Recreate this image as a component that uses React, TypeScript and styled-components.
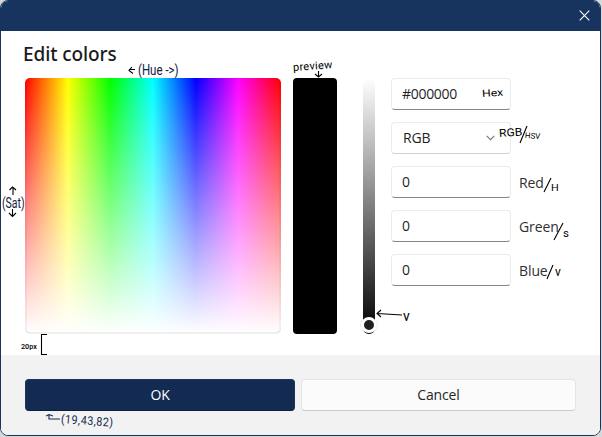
import React from "react";
import styled, { createGlobalStyle, css } from "styled-components";

const Global = createGlobalStyle`
  * { box-sizing: border-box; }
  html, body { margin: 0; background: #d6d8dc; overflow: hidden; }
  button, input { font: inherit; color: inherit; }
`;

const Dialog = styled.main`
  position: relative;
  width: 601px;
  height: 436px;
  display: flex;
  flex-direction: column;
  background: #fff;
  border: 1px solid #17345f;
  border-radius: 8px;
  overflow: hidden;
  font-family: "Open Sans", "Noto Sans", sans-serif;
  font-size: 14px;
  color: #1f1f1f;
`;

const TitleBar = styled.header`
  flex: 0 0 30px;
  display: flex;
  justify-content: flex-end;
  align-items: center;
  padding: 0 10px 2px 0;
  background: #17345f;
`;

const CloseButton = styled.button`
  display: flex;
  padding: 0;
  border: 0;
  background: none;
  color: #fff;
`;

const Content = styled.section`
  flex: 1;
  padding: 11px 24px 0;
`;

const Heading = styled.h1`
  margin: 0 0 0 -2px;
  height: 36px;
  font: 500 19px/24px "Noto Sans", sans-serif;
  letter-spacing: -0.1px;
  color: #1b1b1b;
`;

const Picker = styled.div`
  display: flex;
  align-items: flex-start;
`;

const Spectrum = styled.div`
  width: 256px;
  height: 256px;
  border-radius: 5px;
  background:
    linear-gradient(to bottom, rgba(255, 255, 255, 0), #fff),
    linear-gradient(to right, #f00, #ff0, #0f0, #0ff, #00f, #f0f, #f00);
  box-shadow: inset 0 -2px 0 rgba(0, 0, 0, 0.06), inset -2px 0 0 rgba(0, 0, 0, 0.04), inset 2px 0 0 rgba(0, 0, 0, 0.04);
`;

const Preview = styled.div`
  width: 44px;
  height: 256px;
  margin-left: 12px;
  border-radius: 4px;
  background: #000;
`;

const ValueTrack = styled.div`
  display: flex;
  flex-direction: column;
  justify-content: flex-end;
  align-items: center;
  width: 12px;
  height: 256px;
  margin-left: 26px;
  padding-bottom: 1px;
  border-radius: 6px;
  background: linear-gradient(#fff, #000);
`;

const Thumb = styled.div`
  flex: none;
  width: 16px;
  height: 16px;
  border: 3px solid #fff;
  border-radius: 50%;
  background: #1f1f1f;
  box-shadow: 0 0 0 1px rgba(0, 0, 0, 0.06);
`;

const Fields = styled.div`
  display: flex;
  flex-direction: column;
  gap: 12px;
  margin-left: 16px;
`;

const FieldRow = styled.label`
  display: flex;
  align-items: center;
  gap: 8px;
  height: 32px;
`;

const control = css`
  width: 120px;
  height: 32px;
  padding: 0 10px 1px;
  border: 1px solid #ebebeb;
  border-radius: 4px;
  background: #fff;
  outline: none;
`;

const Input = styled.input`
  ${control}
  border-bottom-color: #868686;
  letter-spacing: -0.3px;
`;

const Select = styled.div`
  ${control}
  display: flex;
  align-items: center;
  justify-content: space-between;
  padding-left: 11px;
  padding-right: 15px;
  border-bottom-color: #d2d2d2;
  letter-spacing: -0.2px;
`;

const FieldName = styled.span`
  color: #303030;
  letter-spacing: -0.1px;
`;

const Footer = styled.footer`
  flex: 0 0 80px;
  display: flex;
  gap: 6px;
  padding: 24px 24px 0;
  background: #f2f2f2;
`;

const Button = styled.button<{ $primary?: boolean }>`
  width: ${(p) => (p.$primary ? 270 : 275)}px;
  height: 32px;
  padding: 0 0 1px;
  border: 1px solid ${(p) => (p.$primary ? "#1d3559" : "#e4e4e4")};
  border-bottom-color: ${(p) => (p.$primary ? "#0d1e3a" : "#cacaca")};
  border-radius: 4px;
  background: ${(p) => (p.$primary ? "#132b52" : "#fbfbfb")};
  color: ${(p) => (p.$primary ? "#fff" : "#252525")};
  letter-spacing: -0.15px;
`;

const Note = styled.span<{ $x: number; $y: number; $size: number; $stretch?: number; $turn?: number; $color?: string; $weight?: number; $track?: number }>`
  position: absolute;
  left: ${(p) => p.$x}px;
  top: ${(p) => p.$y}px;
  font: ${(p) => p.$weight ?? 400} ${(p) => p.$size}px/1 Roboto, sans-serif;
  letter-spacing: ${(p) => p.$track ?? 0}px;
  color: ${(p) => p.$color ?? "#000"};
  white-space: pre;
  pointer-events: none;
  transform-origin: 0 50%;
  transform: rotate(${(p) => p.$turn ?? 0}deg) scaleX(${(p) => p.$stretch ?? 1});
`;

const Marks = styled.svg`
  position: absolute;
  left: -1px;
  top: -1px;
  pointer-events: none;
`;

const channels = ["Red", "Green", "Blue"];

export default function App() {
  return (
    <>
      <Global />
      <Dialog>
        <TitleBar>
          <CloseButton aria-label="Close">
            <svg width="11" height="11" viewBox="0 0 11 11" stroke="currentColor" strokeWidth="1.1">
              <path d="M.7 .7 10.3 10.3M10.3 .7 .7 10.3" />
            </svg>
          </CloseButton>
        </TitleBar>
        <Content>
          <Heading>Edit colors</Heading>
          <Picker>
            <Spectrum />
            <Preview />
            <ValueTrack>
              <Thumb />
            </ValueTrack>
            <Fields>
              <FieldRow>
                <Input defaultValue="#000000" />
              </FieldRow>
              <FieldRow as="div">
                <Select>
                  RGB
                  <svg width="9" height="6" viewBox="0 0 9 6" fill="none" stroke="#777" strokeWidth="1.1">
                    <path d="m.7 .9 3.8 3.8L8.3 .9" />
                  </svg>
                </Select>
              </FieldRow>
              {channels.map((name) => (
                <FieldRow key={name}>
                  <Input defaultValue="0" />
                  <FieldName>{name}</FieldName>
                </FieldRow>
              ))}
            </Fields>
          </Picker>
        </Content>
        <Footer>
          <Button $primary>OK</Button>
          <Button>Cancel</Button>
        </Footer>

        <Note $x={137} $y={62} $size={14} $stretch={0.82} $color="#14213f">{"(Hue ->)"}</Note>
        <Note $x={1} $y={195} $size={14} $stretch={0.75} $color="#14213f">(Sat)</Note>
        <Note $x={292} $y={61} $size={11} $turn={-4} $track={0.3}>preview</Note>
        <Note $x={481} $y={88} $size={10} $stretch={1.22} $turn={-4}>Hex</Note>
        <Note $x={498} $y={127} $size={11} $stretch={1.1} $turn={-4}>RGB</Note>
        <Note $x={524} $y={131} $size={8} $stretch={0.98} $turn={4}>HSV</Note>
        <Note $x={550} $y={183} $size={9} $stretch={1.2}>H</Note>
        <Note $x={562} $y={228} $size={10} $stretch={1.15}>s</Note>
        <Note $x={554} $y={265} $size={12}>v</Note>
        <Note $x={402} $y={308} $size={14}>v</Note>
        <Note $x={20} $y={342} $size={8} $stretch={0.9} $weight={500}>20px</Note>
        <Note $x={60} $y={412} $size={12} $stretch={0.9} $turn={4} $track={0.5} $color="#132b52">(19,43,82)</Note>

        <Marks width="601" height="436" viewBox="0 0 601 436" fill="none" stroke="#000" strokeWidth="1.1">
          <path d="M135 69.5H129M132 67 129 70.5 133 73.5" />
          <path d="M13 195V187M9.5 190 12.5 187 16 190M12.5 209V216M9 213 12.5 216.5 16 213" />
          <path d="M318.5 71V77M315 74 318.5 77 322 74" />
          <path d="M527 126 520 143M551 178 544 192M563 223 554 240M553 265 547 279" />
          <path d="M402 315 377 313.5M381 310 377 313.5 381 317" />
          <path d="M47 334.5H41.5V354.5H47" />
          <path d="M60 419H49V415M46 416 49 414.5 53 416" stroke="#132b52" />
        </Marks>
      </Dialog>
    </>
  );
}
